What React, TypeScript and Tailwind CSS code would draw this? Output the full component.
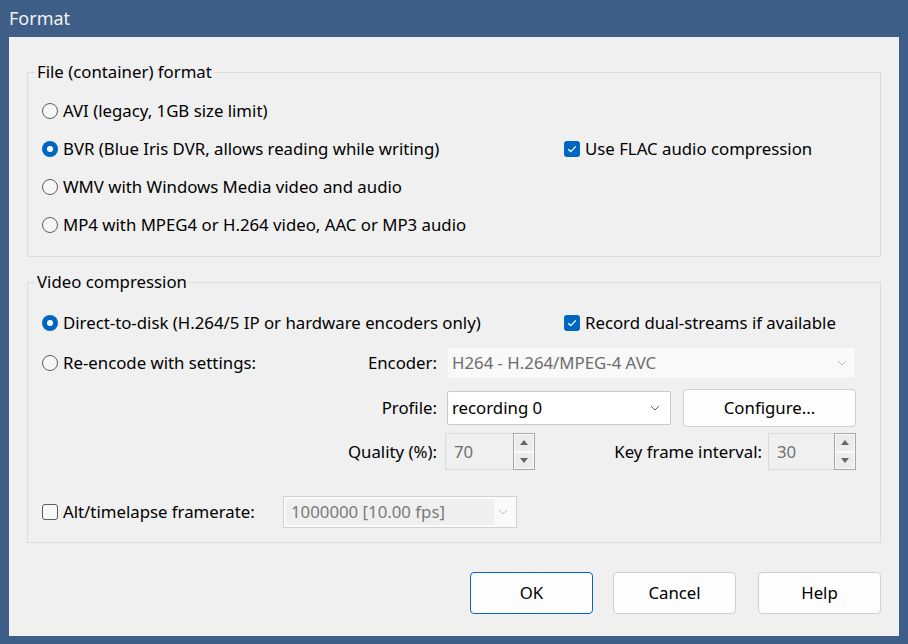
import React from "react";

const Radio = ({ checked }: { checked?: boolean }) =>
  checked ? (
    <span className="w-[16px] h-[16px] rounded-full bg-[#0067c0] flex items-center justify-center shrink-0">
      <span className="w-[6px] h-[6px] rounded-full bg-white" />
    </span>
  ) : (
    <span className="w-[16px] h-[16px] rounded-full border border-[#5c5c5c] bg-[#f7f7f7] shrink-0" />
  );

const Check = ({ checked }: { checked?: boolean }) =>
  checked ? (
    <span className="w-[16px] h-[16px] rounded-[3px] bg-[#0067c0] flex items-center justify-center shrink-0">
      <svg width="10" height="8" viewBox="0 0 10 8">
        <path d="M1.2 4.2 L3.8 6.6 L8.8 1.4" stroke="white" strokeWidth="1.3" fill="none" />
      </svg>
    </span>
  ) : (
    <span className="w-[16px] h-[16px] rounded-[3px] border border-[#5c5c5c] bg-[#f7f7f7] shrink-0" />
  );

const Chevron = ({ color }: { color: string }) => (
  <svg width="10" height="6" viewBox="0 0 10 6">
    <path d="M1 1 L5 5 L9 1" stroke={color} strokeWidth="1" fill="none" />
  </svg>
);

const Spinner = ({ value, w }: { value: string; w: string }) => (
  <div className={`${w} h-[37px] flex`}>
    <div className="flex-1 border-y border-l border-[#dadada] bg-[#f0f0f0] text-[#707070] flex items-center pl-[8px]">
      {value}
    </div>
    <div className="w-[22px] border border-[#a8a8a8] flex flex-col bg-[#f0f0f0]">
      <div className="flex-1 border border-[#fafafa] bg-[#ececec] flex items-center justify-center">
        <svg width="8" height="5" viewBox="0 0 8 5"><path d="M0 5 L4 0 L8 5 Z" fill="#666" /></svg>
      </div>
      <div className="flex-1 border border-[#fafafa] bg-[#ececec] flex items-center justify-center">
        <svg width="8" height="5" viewBox="0 0 8 5"><path d="M0 0 L4 5 L8 0 Z" fill="#666" /></svg>
      </div>
    </div>
  </div>
);

const Btn = ({ children, primary }: { children: React.ReactNode; primary?: boolean }) => (
  <div
    className={`w-[123px] h-[42px] rounded-[4px] bg-[#fdfdfd] flex items-center justify-center text-black ${
      primary ? "border border-[#0067c0]" : "border border-[#d0d0d0]"
    }`}
  >
    {children}
  </div>
);

export default function App() {
  return (
    <div
      className="w-[908px] h-[644px] bg-[#3e5e88] flex flex-col text-[16.8px] text-black"
      style={{ fontFamily: '"Noto Sans", "Open Sans", sans-serif' }}
    >
      <div className="h-[37px] pl-[9px] flex items-center text-[#f2f2f2] text-[18px]">Format</div>
      <div className="mx-[9px] mb-[8px] flex-1 bg-[#f0f0f0] px-[18px] pt-[24px]">
        <fieldset className="border border-[#dcdcdc] px-[14px] pb-[12px] m-0">
          <legend className="ml-[-7px] px-[2px] h-[22px] leading-[22px]">File (container) format</legend>
          <div className="pt-[9px]">
            <div className="h-[38px] flex items-center gap-[5px]">
              <Radio />
              <span>AVI (legacy, 1GB size limit)</span>
            </div>
            <div className="h-[38px] flex items-center">
              <div className="w-[522px] flex items-center gap-[5px]">
                <Radio checked />
                <span>BVR (Blue Iris DVR, allows reading while writing)</span>
              </div>
              <div className="flex items-center gap-[5px]">
                <Check checked />
                <span>Use FLAC audio compression</span>
              </div>
            </div>
            <div className="h-[38px] flex items-center gap-[5px]">
              <Radio />
              <span>WMV with Windows Media video and audio</span>
            </div>
            <div className="h-[38px] flex items-center gap-[5px]">
              <Radio />
              <span>MP4 with MPEG4 or H.264 video, AAC or MP3 audio</span>
            </div>
          </div>
        </fieldset>

        <fieldset className="mt-[14px] border border-[#dcdcdc] pl-[14px] pr-[24px] pb-[14px] m-0">
          <legend className="ml-[-7px] px-[2px] h-[22px] leading-[22px]">Video compression</legend>
          <div className="mt-[11px] h-[38px] flex items-center">
            <div className="w-[522px] flex items-center gap-[5px]">
              <Radio checked />
              <span>Direct-to-disk (H.264/5 IP or hardware encoders only)</span>
            </div>
            <div className="flex items-center gap-[5px]">
              <Check checked />
              <span>Record dual-streams if available</span>
            </div>
          </div>
          <div className="mt-[5px] h-[32px] flex items-center">
            <div className="w-[395px] flex items-center">
              <div className="flex items-center gap-[5px]">
                <Radio />
                <span>Re-encode with settings:</span>
              </div>
              <span className="ml-auto">Encoder:</span>
            </div>
            <div className="ml-[10px] flex-1 h-[32px] bg-[#f9f9f9] border border-[#ececec] flex items-center pl-[4px] pr-[8px] text-[#6d6d6d]">
              <span>H264 - H.264/MPEG-4 AVC</span>
              <span className="ml-auto"><Chevron color="#b8b8b8" /></span>
            </div>
          </div>
          <div className="mt-[10px] h-[38px] flex items-center">
            <div className="w-[395px] flex justify-end">Profile:</div>
            <div className="ml-[10px] w-[224px] h-[34px] bg-white border border-[#cacaca] rounded-[2px] flex items-center pl-[4px] pr-[10px]">
              <span>recording 0</span>
              <span className="ml-auto"><Chevron color="#5a5a5a" /></span>
            </div>
            <div className="ml-[12px] flex-1 h-[38px] bg-[#fdfdfd] border border-[#d0d0d0] rounded-[4px] flex items-center justify-center">
              Configure...
            </div>
          </div>
          <div className="mt-[6px] h-[37px] flex items-center">
            <div className="w-[395px] flex justify-end">Quality (%):</div>
            <div className="ml-[8px]">
              <Spinner value="70" w="w-[90px]" />
            </div>
            <div className="flex-1 flex justify-end">Key frame interval:</div>
            <div className="ml-[6px]">
              <Spinner value="30" w="w-[88px]" />
            </div>
          </div>
          <div className="mt-[26px] h-[32px] flex items-center">
            <div className="w-[241px] flex items-center gap-[5px]">
              <Check />
              <span>Alt/timelapse framerate:</span>
            </div>
            <div className="w-[234px] h-[32px] bg-[#fafafa] border border-[#d0d0d0] flex items-center p-[2px]">
              <div className="w-[208px] h-full bg-[#efefef] flex items-center pl-[5px] text-[#7a7a7a]">
                1000000 [10.00 fps]
              </div>
              <span className="ml-auto mr-[6px]"><Chevron color="#c0c0c0" /></span>
            </div>
          </div>
        </fieldset>

        <div className="mt-[29px] flex justify-end">
          <Btn primary>OK</Btn>
          <div className="ml-[20px]"><Btn>Cancel</Btn></div>
          <div className="ml-[22px]"><Btn>Help</Btn></div>
        </div>
      </div>
    </div>
  );
}
